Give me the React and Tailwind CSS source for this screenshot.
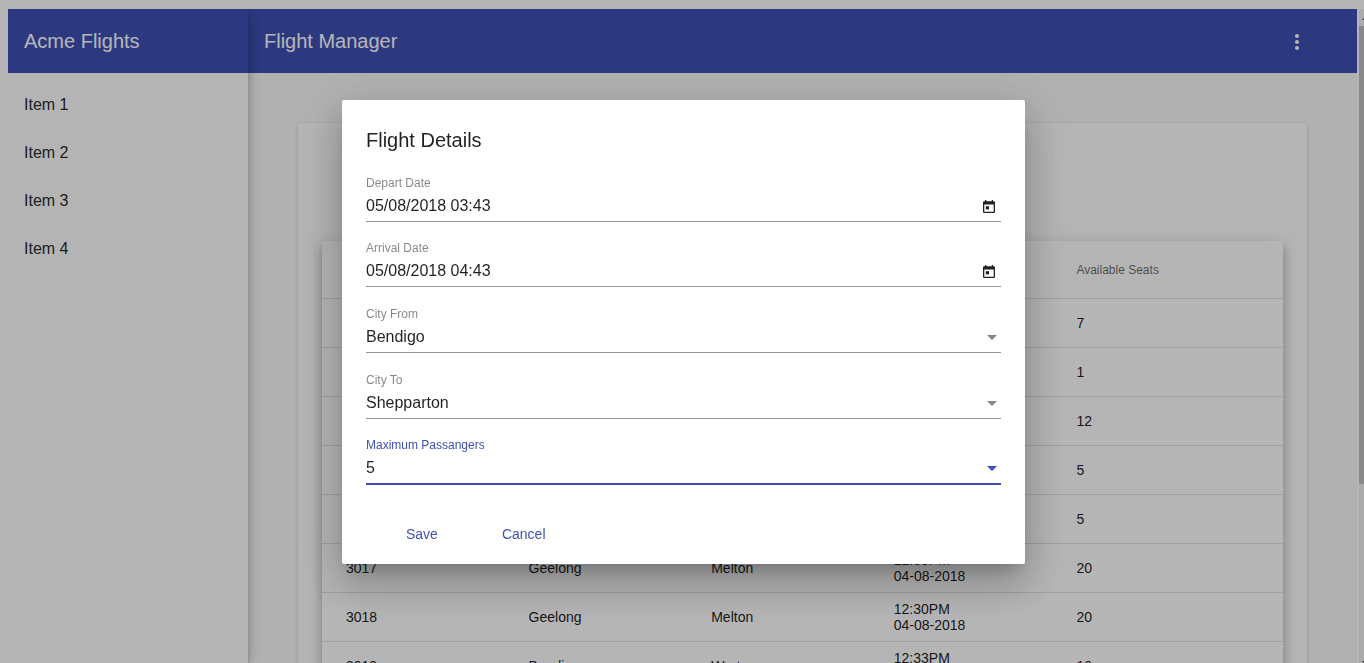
import React, { useState } from "react";
import { MdMoreVert } from "react-icons/md";

const NAV = ["Item 1", "Item 2", "Item 3", "Item 4"];

const HEADINGS = ["", "", "", "", "Available Seats"];

const FLIGHTS = [
  { seats: "7" },
  { seats: "1" },
  { seats: "12" },
  { seats: "5" },
  { seats: "5" },
  { id: "3017", from: "Geelong", to: "Melton", time: "12:30PM", date: "04-08-2018", seats: "20" },
  { id: "3018", from: "Geelong", to: "Melton", time: "12:30PM", date: "04-08-2018", seats: "20" },
  { id: "3019", from: "Bendigo", to: "Werton", time: "12:33PM", date: "04-08-2018", seats: "10" },
];

function Sidebar() {
  return (
    <aside className="z-10 flex w-60 shrink-0 flex-col bg-[#fefefe] shadow-[0_3px_5px_-1px_rgba(0,0,0,0.2),0_6px_10px_0_rgba(0,0,0,0.14),0_1px_18px_0_rgba(0,0,0,0.12)]">
      <div className="flex h-16 items-center bg-[#3f51b5] px-4 text-xl text-white">Acme Flights</div>
      <nav className="pt-2">
        {NAV.map((item) => (
          <a key={item} href="#" className="flex h-12 items-center px-4 text-base text-black/87">
            {item}
          </a>
        ))}
      </nav>
    </aside>
  );
}

function FlightTable() {
  return (
    <table className="block bg-white text-left text-sm shadow-[0_5px_5px_-3px_rgba(0,0,0,0.2),0_8px_10px_1px_rgba(0,0,0,0.14),0_3px_14px_2px_rgba(0,0,0,0.12)]">
      <thead className="block">
        <tr className="flex h-[58px] items-center border-b border-black/12 px-6">
          {HEADINGS.map((h, i) => (
            <th key={i} className="flex-1 text-xs font-normal text-black/60">{h}</th>
          ))}
        </tr>
      </thead>
      <tbody className="block">
        {FLIGHTS.map((f, i) => (
          <tr key={i} className="flex h-[49px] items-center border-b border-black/12 px-6 leading-4 text-black/90">
            <td className="flex-1">{f.id}</td>
            <td className="flex-1">{f.from}</td>
            <td className="flex-1">{f.to}</td>
            <td className="flex-1">
              {f.time}
              <br />
              {f.date}
            </td>
            <td className="flex-1">{f.seats}</td>
          </tr>
        ))}
      </tbody>
    </table>
  );
}

function ScrollTrack() {
  return (
    <div className="flex w-[7px] shrink-0 flex-col items-end overflow-hidden bg-white pl-0.5">
      <div className="flex w-full grow flex-col bg-[#f1f1f1]">
        <svg className="h-[17px] w-full" viewBox="0 0 5 17" fill="#505050"><path d="M3 11l2-2v2z" /></svg>
        <div className="h-[70%] w-full bg-[#c1c1c1]" />
        <svg className="mt-auto h-[17px] w-full" viewBox="0 0 5 17" fill="#505050"><path d="M3 15h2v2z" /></svg>
      </div>
    </div>
  );
}

function CalendarIcon() {
  return (
    <svg className="h-[13px] w-3" viewBox="0 0 12 13" fill="currentColor" fillRule="evenodd">
      <path d="M2 0h1.3v1.2h5.4V0H10v1.2h.8A1.2 1.2 0 0 1 12 2.4v9.4A1.2 1.2 0 0 1 10.8 13H1.2A1.2 1.2 0 0 1 0 11.8V2.4a1.2 1.2 0 0 1 1.2-1.2H2zM1.3 4.4v7.3h9.4V4.4z" />
      <path d="M2.8 6.2h3.2v3.2H2.8z" />
    </svg>
  );
}

function DateField({ id, label, initial }) {
  const [value, setValue] = useState(initial);
  return (
    <div className="flex h-[65px] flex-col justify-end border-b border-black/42 pb-[3px]">
      <label htmlFor={id} className="text-xs leading-4 text-black/48">{label}</label>
      <div className="mt-[3px] flex h-6 items-center">
        <input
          id={id}
          value={value}
          onChange={(e) => setValue(e.target.value)}
          className="h-6 min-w-0 grow bg-transparent text-base text-black/87 outline-none"
        />
        <button type="button" aria-label={"Pick " + label} className="mr-1.5 text-black/87">
          <CalendarIcon />
        </button>
      </div>
    </div>
  );
}

function SelectField({ id, label, options, active = false }) {
  return (
    <div
      className={
        "flex h-[66px] flex-col justify-end pb-[3px] " +
        (active ? "border-b-2 border-[#3f51b5] text-[#3f51b5]" : "border-b border-black/42 text-black/48")
      }
    >
      <label htmlFor={id} className="text-xs leading-4">{label}</label>
      <div className="mt-[3px] grid h-6 items-center">
        <select id={id} className="col-start-1 row-start-1 h-6 appearance-none bg-transparent text-base text-black/87 outline-none">
          {options.map((o) => (
            <option key={o}>{o}</option>
          ))}
        </select>
        <svg className="pointer-events-none col-start-1 row-start-1 mr-1 h-[5px] w-2.5 justify-self-end" viewBox="0 0 10 5" fill="currentColor">
          <path d="M0 0h10L5 5z" />
        </svg>
      </div>
    </div>
  );
}

function FlightDialog() {
  return (
    <div className="fixed inset-0 z-20 flex items-center justify-center bg-black/29 pt-px pl-[3px]">
      <form
        role="dialog"
        aria-labelledby="dialog-title"
        onSubmit={(e) => e.preventDefault()}
        className="w-[683px] max-w-full rounded-xs bg-white px-6 pt-6 pb-3 shadow-[0_11px_15px_-7px_rgba(0,0,0,0.2),0_24px_38px_3px_rgba(0,0,0,0.14),0_9px_46px_8px_rgba(0,0,0,0.12)]"
      >
        <h2 id="dialog-title" className="text-xl leading-[33px] text-black/87">Flight Details</h2>
        <DateField id="depart" label="Depart Date" initial="05/08/2018 03:43" />
        <DateField id="arrival" label="Arrival Date" initial="05/08/2018 04:43" />
        <SelectField id="from" label="City From" options={["Bendigo", "Geelong"]} />
        <SelectField id="to" label="City To" options={["Shepparton", "Melton"]} />
        <SelectField id="max" label="Maximum Passangers" options={["5", "10", "20"]} active />
        <div className="mt-[31px] flex gap-8 px-6 text-sm text-[#3f51b5]">
          <button type="submit" className="h-9 px-4">Save</button>
          <button type="button" className="h-9 px-4">Cancel</button>
        </div>
      </form>
    </div>
  );
}

export default function App() {
  return (
    <div className="flex h-screen overflow-hidden bg-[#fefefe] pt-[9px] pl-2 font-['Liberation_Sans',Arial,sans-serif]">
      <div className="flex min-w-0 grow overflow-hidden">
        <Sidebar />
        <div className="flex min-w-0 grow flex-col bg-[#fafafa]">
          <header className="flex h-16 shrink-0 items-center justify-between bg-[#3f51b5] pr-12 pl-4 text-white">
            <h1 className="text-xl">Flight Manager</h1>
            <button type="button" aria-label="More options" className="pt-0.5">
              <MdMoreVert className="size-6" />
            </button>
          </header>
          <main className="grow overflow-hidden p-[50px] pb-0">
            <section className="rounded-xs bg-[#fefefe] px-6 pt-[118px] pb-6 shadow-[0_3px_1px_-2px_rgba(0,0,0,0.2),0_2px_2px_0_rgba(0,0,0,0.14),0_1px_5px_0_rgba(0,0,0,0.12)]">
              <FlightTable />
            </section>
          </main>
        </div>
      </div>
      <ScrollTrack />
      <FlightDialog />
    </div>
  );
}
